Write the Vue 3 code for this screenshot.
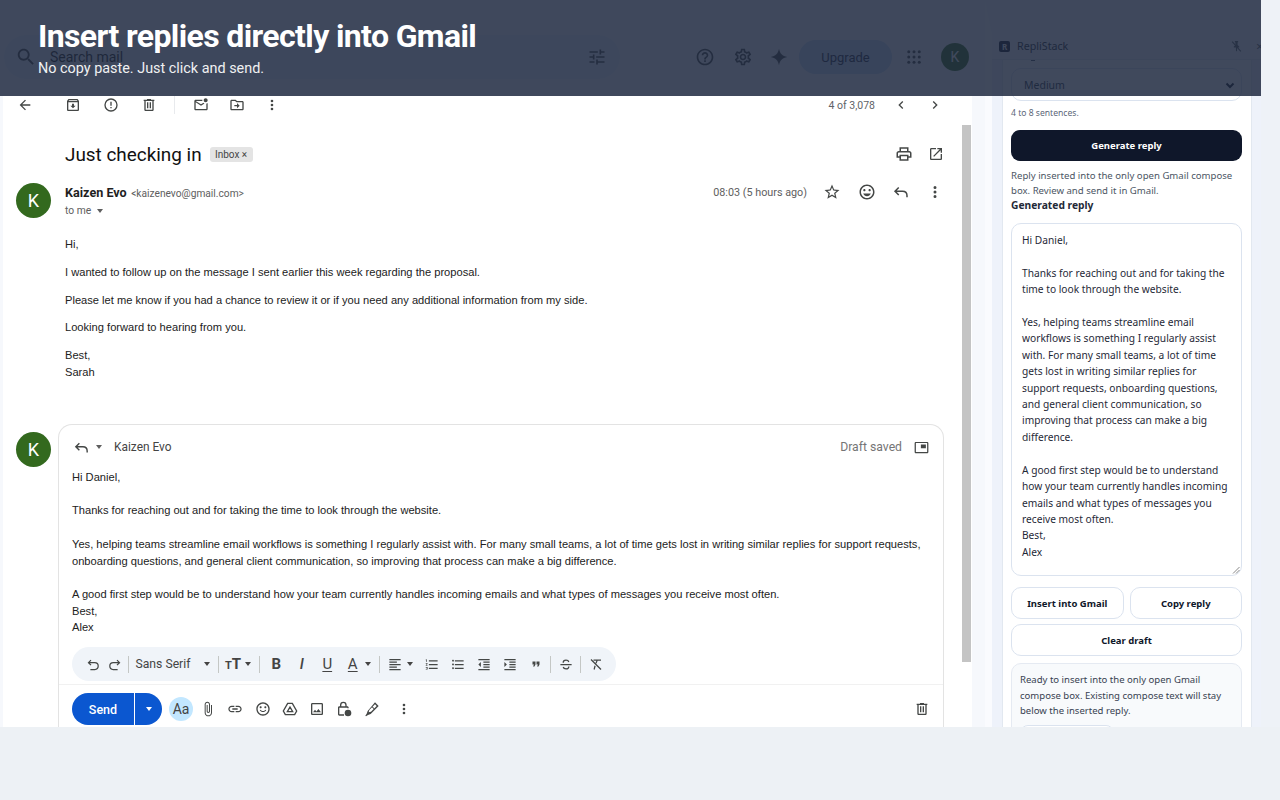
<template>
  <div class="shot">
    <div class="mail">
      <header class="topbar">
        <div class="search">
          <svg class="ic ic-search" viewBox="0 0 24 24"><path :d="ic.search" /></svg>
          <span class="search-text">Search mail</span>
          <svg class="ic ic-tune" viewBox="0 0 24 24"><path :d="ic.tune" /></svg>
        </div>
        <svg class="ic top-help" viewBox="0 0 24 24"><path :d="ic.help" /></svg>
        <svg class="ic top-gear" viewBox="0 0 24 24"><path :d="ic.gear" /></svg>
        <svg class="ic top-spark" viewBox="0 0 24 24"><path d="M12 1c1 6 4.500 10 11 11-6.500 1-10 5-11 11-1-6-4.500-10-11-11 6.500-1 10-5 11-11z" /></svg>
        <button class="upgrade">Upgrade</button>
        <svg class="ic top-apps" viewBox="0 0 24 24">
          <circle v-for="d in appDots" :key="d.k" :cx="d.x" :cy="d.y" r="2" />
        </svg>
        <div class="top-avatar">K</div>
      </header>

      <div class="content">
        <div class="actions">
          <svg class="ic a-back" viewBox="0 0 24 24"><path :d="ic.back" /></svg>
          <svg class="ic a-first" viewBox="0 0 24 24"><path :d="ic.archive" /></svg>
          <svg class="ic a-next" viewBox="0 0 24 24"><path :d="ic.report" /></svg>
          <svg class="ic a-next" viewBox="0 0 24 24"><path :d="ic.trash" /></svg>
          <span class="a-sep"></span>
          <svg class="ic a-mail" viewBox="0 0 24 24"><path :d="ic.unread" /></svg>
          <svg class="ic a-tight" viewBox="0 0 24 24"><path :d="ic.move" /></svg>
          <svg class="ic a-tight" viewBox="0 0 24 24"><path :d="ic.more" /></svg>
          <span class="count">4 of 3,078</span>
          <svg class="ic a-chev" viewBox="0 0 24 24"><path :d="ic.left" /></svg>
          <svg class="ic a-chev2" viewBox="0 0 24 24"><path :d="ic.right" /></svg>
        </div>

        <div class="subject-row">
          <h1 class="subject">Just checking in</h1>
          <span class="chip">Inbox <i>×</i></span>
          <svg class="ic s-print" viewBox="0 0 24 24"><path :d="ic.print" /></svg>
          <svg class="ic s-open" viewBox="0 0 24 24"><path :d="ic.open" /></svg>
        </div>

        <div class="sender-row">
          <div class="avatar">K</div>
          <div class="sender-info">
            <div><b class="name">Kaizen Evo</b> <span class="addr">&lt;kaizenevo@gmail.com&gt;</span></div>
            <div class="tome">to me <i class="mini-caret"></i></div>
          </div>
          <span class="time">08:03 (5 hours ago)</span>
          <svg class="ic m-star" viewBox="0 0 24 24"><path :d="ic.star" /></svg>
          <svg class="ic m-icon" viewBox="0 0 24 24"><path :d="ic.smile" /></svg>
          <svg class="ic-line m-icon" viewBox="0 0 24 24"><path :d="ic.reply" /></svg>
          <svg class="ic m-icon m-last" viewBox="0 0 24 24"><path :d="ic.more" /></svg>
        </div>

        <div class="message">
          <p>Hi,</p>
          <p>I wanted to follow up on the message I sent earlier this week regarding the proposal.</p>
          <p>Please let me know if you had a chance to review it or if you need any additional information from my side.</p>
          <p>Looking forward to hearing from you.</p>
          <p>Best,<br />Sarah</p>
        </div>

        <div class="reply-row">
          <div class="avatar">K</div>
          <div class="compose">
            <div class="compose-head">
              <svg class="ic-line c-reply" viewBox="0 0 24 24"><path :d="ic.reply" /></svg>
              <i class="mini-caret c-caret"></i>
              <span class="c-name">Kaizen Evo</span>
              <span class="draft">Draft saved</span>
              <svg class="ic c-pip" viewBox="0 0 24 24"><path :d="ic.pip" /></svg>
            </div>
            <div class="compose-body">
              <div>Hi Daniel,</div>
              <br />
              <div>Thanks for reaching out and for taking the time to look through the website.</div>
              <br />
              <div>Yes, helping teams streamline email workflows is something I regularly assist with. For many small teams, a lot of time gets lost in writing similar replies for support requests, onboarding questions, and general client communication, so improving that process can make a big difference.</div>
              <br />
              <div>A good first step would be to understand how your team currently handles incoming emails and what types of messages you receive most often.</div>
              <div>Best,</div>
              <div>Alex</div>
            </div>
            <div class="fmt">
              <svg class="ic-line f21" viewBox="0 0 24 24"><path :d="ic.undo" /></svg>
              <svg class="ic-line f21" viewBox="0 0 24 24"><path :d="ic.redo" /></svg>
              <span class="fsep f-s1"></span>
              <span class="font-name">Sans Serif</span>
              <i class="fcaret"></i>
              <span class="fsep"></span>
              <span class="f-tt"><small>T</small>T</span>
              <i class="fcaret"></i>
              <span class="fsep f-s2"></span>
              <span class="f-letter bold">B</span>
              <span class="f-letter ital">I</span>
              <span class="f-letter under">U</span>
              <span class="f-letter under f-a">A</span>
              <i class="fcaret f-ca"></i>
              <span class="fsep"></span>
              <svg class="ic f20" viewBox="0 0 24 24"><path :d="ic.alignLeft" /></svg>
              <i class="fcaret"></i>
              <svg class="ic f26 f-num" viewBox="0 0 24 24"><path :d="ic.numbered" /></svg>
              <svg class="ic f26" viewBox="0 0 24 24"><path :d="ic.bullets" /></svg>
              <svg class="ic f26" viewBox="0 0 24 24"><path :d="ic.indentLess" /></svg>
              <svg class="ic f26" viewBox="0 0 24 24"><path :d="ic.indentMore" /></svg>
              <svg class="ic f26 f-quote" viewBox="0 0 24 24"><path :d="ic.quote" /></svg>
              <span class="fsep f-s3"></span>
              <svg class="ic-line f20" viewBox="0 0 24 24"><path :d="ic.strike" /></svg>
              <span class="fsep"></span>
              <svg class="ic-line f20" viewBox="0 0 24 24"><path :d="ic.clearFmt" /></svg>
            </div>
            <div class="send-row">
              <button class="send">Send</button>
              <button class="send-more"><i></i></button>
              <span class="aa">Aa</span>
              <svg class="ic b-first" viewBox="0 0 24 24"><path :d="ic.attach" /></svg>
              <svg class="ic b-i" viewBox="0 0 24 24"><path :d="ic.link" /></svg>
              <svg class="ic b-i" viewBox="0 0 24 24"><path :d="ic.smileLine" /></svg>
              <svg class="ic-line b-i" viewBox="0 0 24 24"><path :d="ic.drive" /></svg>
              <svg class="ic b-i" viewBox="0 0 24 24"><path :d="ic.photo" /></svg>
              <svg class="ic b-i" viewBox="0 0 24 24"><path :d="ic.lock" /></svg>
              <svg class="ic b-i" viewBox="0 0 24 24"><path :d="ic.pen" /></svg>
              <svg class="ic b-more" viewBox="0 0 24 24"><path :d="ic.more" /></svg>
              <svg class="ic b-trash" viewBox="0 0 24 24"><path :d="ic.trash" /></svg>
            </div>
          </div>
        </div>
      </div>
      <div class="scrollbar"></div>
    </div>

    <aside class="side">
      <div class="side-head">
        <span class="logo">R</span>
        <span class="brand">RepliStack</span>
        <svg class="ic pin" viewBox="0 0 24 24"><path d="M14 4v5l3 3v2h-4v6l-1 1-1-1v-6H7v-2l3-3V4H9V2h6v2h-1z" /><path class="pin-slash" d="M4 3l16 18" /></svg>
        <span class="close">×</span>
      </div>
      <div class="side-card">
        <div class="cut-tick"></div>
        <div class="select-box">Medium <svg class="sel-chev" viewBox="0 0 12 12"><path d="M2.500 4.500 6 8l3.500-3.500" /></svg></div>
        <div class="hint">4 to 8 sentences.</div>
        <button class="generate">Generate reply</button>
        <div class="status">Reply inserted into the only open Gmail compose<br />box. Review and send it in Gmail.</div>
        <div class="gen-title">Generated reply</div>
        <div class="draft-box">{{ draftText }}
          <svg class="grip" viewBox="0 0 8 8"><path d="M7.500 1 1 7.500M7.500 4 4 7.500" /></svg>
        </div>
        <div class="btn-row">
          <button class="ghost">Insert into Gmail</button>
          <button class="ghost">Copy reply</button>
        </div>
        <button class="ghost wide">Clear draft</button>
        <div class="info-box">
          Ready to insert into the only open Gmail<br />compose box. Existing compose text will stay<br />below the inserted reply.
          <div class="info-btn"></div>
        </div>
      </div>
    </aside>

    <div class="banner">
      <div class="banner-title">Insert replies directly into Gmail</div>
      <div class="banner-sub">No copy paste. Just click and send.</div>
    </div>
  </div>
</template>

<script setup>
const ic = {
  search: 'M15.5 14h-.79l-.28-.27C15.41 12.59 16 11.11 16 9.5 16 5.91 13.09 3 9.5 3S3 5.91 3 9.5 5.91 16 9.5 16c1.61 0 3.09-.59 4.23-1.57l.27.28v.79l5 4.99L20.490 19l-4.990-5zm-6 0C7.010 14 5 11.990 5 9.500S7.010 5 9.500 5 14 7.010 14 9.500 11.990 14 9.500 14z',
  tune: 'M3 17v2h6v-2H3zM3 5v2h10V5H3zm10 16v-2h8v-2h-8v-2h-2v6h2zM7 9v2H3v2h4v2h2V9H7zm14 4v-2H11v2h10zm-6-4h2V7h4V5h-4V3h-2v6z',
  help: 'M11 18h2v-2h-2v2zm1-16C6.480 2 2 6.480 2 12s4.480 10 10 10 10-4.480 10-10S17.520 2 12 2zm0 18c-4.410 0-8-3.590-8-8s3.590-8 8-8 8 3.590 8 8-3.590 8-8 8zm0-14c-2.210 0-4 1.790-4 4h2c0-1.100.9-2 2-2s2 .9 2 2c0 2-3 1.750-3 5h2c0-2.250 3-2.500 3-5 0-2.210-1.790-4-4-4z',
  gear: 'M19.430 12.980c.04-.32.07-.64.07-.98 0-.34-.03-.66-.07-.98l2.110-1.650c.19-.15.24-.42.12-.64l-2-3.460c-.09-.16-.26-.25-.44-.25-.06 0-.12.01-.17.03l-2.490 1c-.52-.4-1.080-.73-1.690-.98l-.38-2.650C14.460 2.180 14.250 2 14 2h-4c-.25 0-.46.18-.49.42l-.38 2.650c-.61.25-1.170.59-1.690.98l-2.490-1c-.06-.02-.12-.03-.18-.03-.17 0-.34.09-.43.25l-2 3.460c-.13.22-.07.49.12.64l2.110 1.650c-.04.32-.07.65-.07.98 0 .33.03.66.07.98l-2.110 1.650c-.19.15-.24.42-.12.64l2 3.460c.09.16.26.25.44.25.06 0 .12-.01.17-.03l2.490-1c.52.4 1.080.73 1.690.98l.38 2.650c.03.24.24.42.49.42h4c.25 0 .46-.18.49-.42l.38-2.650c.61-.25 1.170-.59 1.690-.98l2.490 1c.06.02.12.03.18.03.17 0 .34-.09.43-.25l2-3.460c.12-.22.07-.49-.12-.64l-2.110-1.650zm-1.980-1.710c.04.31.05.52.05.73 0 .21-.02.43-.05.73l-.14 1.130.89.7 1.080.84-.7 1.210-1.270-.51-1.040-.42-.9.68c-.43.32-.84.56-1.250.73l-1.060.43-.16 1.130-.2 1.350h-1.400l-.19-1.350-.16-1.130-1.060-.43c-.43-.18-.83-.41-1.230-.71l-.91-.7-1.060.43-1.270.51-.7-1.210 1.080-.84.89-.7-.14-1.130c-.03-.31-.05-.54-.05-.74s.02-.43.05-.73l.14-1.130-.89-.7-1.080-.84.7-1.210 1.270.51 1.040.42.9-.68c.43-.32.84-.56 1.250-.73l1.060-.43.16-1.130.2-1.350h1.390l.19 1.350.16 1.130 1.060.43c.43.18.83.41 1.230.71l.91.7 1.060-.43 1.270-.51.7 1.210-1.070.85-.89.7.14 1.130zM12 8c-2.210 0-4 1.790-4 4s1.790 4 4 4 4-1.790 4-4-1.790-4-4-4zm0 6c-1.100 0-2-.9-2-2s.9-2 2-2 2 .9 2 2-.9 2-2 2z',
  back: 'M20 11H7.830l5.590-5.590L12 4l-8 8 8 8 1.410-1.410L7.830 13H20v-2z',
  archive: 'M20.540 5.230l-1.390-1.680C18.880 3.210 18.470 3 18 3H6c-.47 0-.88.21-1.160.55L3.460 5.230C3.170 5.570 3 6.020 3 6.500V19c0 1.100.9 2 2 2h14c1.100 0 2-.9 2-2V6.500c0-.48-.17-.93-.46-1.270zM6.240 5h11.520l.81.97H5.440l.8-.97zM5 19V8h14v11H5zm8.450-9h-2.900v3H8l4 4 4-4h-2.550z',
  report: 'M12 2a10 10 0 1 0 0 20 10 10 0 0 0 0-20zm0 18a8 8 0 1 1 0-16 8 8 0 0 1 0 16zM11 7h2v6h-2zM11 15h2v2h-2z',
  trash: 'M15 4V3H9v1H4v2h1v13c0 1.100.9 2 2 2h10c1.100 0 2-.9 2-2V6h1V4h-5zm2 15H7V6h10v13zM9 8h2v9H9zm4 0h2v9h-2z',
  unread: 'M22 8.980V18c0 1.100-.9 2-2 2H4c-1.100 0-2-.9-2-2V6c0-1.100.9-2 2-2h10.100c-.06.32-.1.66-.1 1 0 .34.04.68.1 1H4l8 5 3.670-2.290c.47.43 1.020.76 1.630.98L12 13 4 8v10h16V9.900c.74-.15 1.420-.48 2-.92zM16 5c0 1.660 1.340 3 3 3s3-1.340 3-3-1.340-3-3-3-3 1.340-3 3z',
  move: 'M20 6h-8l-2-2H4c-1.100 0-1.990.9-1.990 2L2 18c0 1.100.9 2 2 2h16c1.100 0 2-.9 2-2V8c0-1.100-.9-2-2-2zm0 12H4V6h5.170l2 2H20v10zm-8-4H8v-2h4V9l4 4-4 4v-3z',
  more: 'M12 8a2 2 0 1 0 0-4 2 2 0 0 0 0 4zm0 2a2 2 0 1 0 0 4 2 2 0 0 0 0-4zm0 6a2 2 0 1 0 0 4 2 2 0 0 0 0-4z',
  left: 'M15.410 7.410L14 6l-6 6 6 6 1.410-1.410L10.830 12z',
  right: 'M10 6L8.590 7.410 13.170 12l-4.580 4.590L10 18l6-6z',
  print: 'M19 8h-1V3H6v5H5c-1.660 0-3 1.340-3 3v6h4v4h12v-4h4v-6c0-1.660-1.340-3-3-3zM8 5h8v3H8V5zm8 12v2H8v-4h8v2zm2-2v-2H6v2H4v-4c0-.55.45-1 1-1h14c.55 0 1 .45 1 1v4h-2z',
  open: 'M19 19H5V5h7V3H5c-1.110 0-2 .9-2 2v14c0 1.100.89 2 2 2h14c1.100 0 2-.9 2-2v-7h-2v7zM14 3v2h3.590l-9.830 9.830 1.410 1.410L19 6.410V10h2V3h-7z',
  star: 'M22 9.240l-7.190-.62L12 2 9.190 8.630 2 9.240l5.460 4.730L5.820 21 12 17.270 18.180 21l-1.630-7.030L22 9.240zM12 15.400l-3.760 2.270 1-4.280-3.320-2.880 4.380-.38L12 6.100l1.710 4.040 4.380.38-3.320 2.880 1 4.280L12 15.400z',
  smile: 'M11.990 2C6.470 2 2 6.480 2 12s4.470 10 9.990 10C17.520 22 22 17.520 22 12S17.520 2 11.990 2zM12 20c-4.420 0-8-3.580-8-8s3.580-8 8-8 8 3.580 8 8-3.580 8-8 8zm3.500-9c.83 0 1.500-.67 1.500-1.500S16.330 8 15.500 8 14 8.670 14 9.500s.67 1.500 1.500 1.500zm-7 0c.83 0 1.500-.67 1.500-1.500S9.330 8 8.500 8 7 8.670 7 9.500 7.670 11 8.500 11zm3.500 6.500c2.330 0 4.310-1.460 5.110-3.500H6.890c.8 2.040 2.780 3.500 5.110 3.500z',
  smileLine: 'M11.990 2C6.470 2 2 6.480 2 12s4.470 10 9.990 10C17.520 22 22 17.520 22 12S17.520 2 11.990 2zM12 20c-4.420 0-8-3.580-8-8s3.580-8 8-8 8 3.580 8 8-3.580 8-8 8zm3.500-9c.83 0 1.500-.67 1.500-1.500S16.330 8 15.500 8 14 8.670 14 9.500s.67 1.500 1.500 1.500zm-7 0c.83 0 1.500-.67 1.500-1.500S9.330 8 8.500 8 7 8.670 7 9.500 7.670 11 8.500 11zm3.500 4c-1.500 0-2.800-.8-3.500-2l-1.300.8c1 1.600 2.800 2.700 4.800 2.700s3.800-1.100 4.800-2.700l-1.300-.8c-.7 1.200-2 2-3.500 2z',
  reply: 'M9 6 4 11l5 5M4 11h10c3.500 0 6 2.500 6 6v2',
  pip: 'M19 7h-8v6h8V7zm2-4H3c-1.100 0-2 .9-2 2v14c0 1.100.9 2 2 2h18c1.100 0 2-.9 2-2V5c0-1.100-.9-2-2-2zm0 16.010H3V4.980h18v14.030z',
  undo: 'M8 5 4 9l4 4M4 9h10a5.500 5.500 0 0 1 0 11H7',
  redo: 'M16 5l4 4-4 4M20 9H10a5.500 5.500 0 0 0 0 11h7',
  alignLeft: 'M15 15H3v2h12v-2zm0-8H3v2h12V7zM3 13h18v-2H3v2zm0 8h18v-2H3v2zM3 3v2h18V3H3z',
  numbered: 'M2 17h2v.5H3v1h1v.5H2v1h3v-4H2v1zm1-9h1V4H2v1h1v3zm-1 3h1.800L2 13.100v.9h3v-1H3.200L5 10.900V10H2v1zm5-6v2h14V5H7zm0 14h14v-2H7v2zm0-6h14v-2H7v2z',
  bullets: 'M4 10.500c-.83 0-1.500.67-1.500 1.500s.67 1.500 1.500 1.500 1.500-.67 1.500-1.500-.67-1.500-1.500-1.500zm0-6c-.83 0-1.500.67-1.500 1.500S3.170 7.500 4 7.500 5.500 6.830 5.500 6 4.830 4.500 4 4.500zm0 12c-.83 0-1.500.68-1.500 1.500s.68 1.500 1.500 1.500 1.500-.68 1.500-1.500-.67-1.500-1.500-1.500zM7 19h14v-2H7v2zm0-6h14v-2H7v2zm0-8v2h14V5H7z',
  indentLess: 'M11 17h10v-2H11v2zm-8-5l4 4V8l-4 4zm0 9h18v-2H3v2zM3 3v2h18V3H3zm8 6h10V7H11v2zm0 4h10v-2H11v2z',
  indentMore: 'M3 21h18v-2H3v2zM3 8v8l4-4-4-4zm8 9h10v-2H11v2zM3 3v2h18V3H3zm8 6h10V7H11v2zm0 4h10v-2H11v2z',
  quote: 'M6 17h3l2-4V7H5v6h3zm8 0h3l2-4V7h-6v6h3z',
  strike: 'M3 12h18M7.500 9c0-2.500 2-4 4.500-4s4 1 4.500 3M16.500 15c0 2.500-2 4-4.500 4s-4-1-4.500-3',
  clearFmt: 'M4 4l16 16M8 5h12M14 5l-2 5M10.500 14 9 20',
  attach: 'M16.500 6v11.500c0 2.210-1.790 4-4 4s-4-1.790-4-4V5c0-1.380 1.120-2.500 2.500-2.500s2.500 1.120 2.500 2.500v10.500c0 .55-.45 1-1 1s-1-.45-1-1V6H10v9.500c0 1.380 1.120 2.500 2.500 2.500s2.500-1.120 2.500-2.500V5c0-2.210-1.790-4-4-4S7 2.790 7 5v12.500c0 3.040 2.460 5.500 5.500 5.500s5.500-2.460 5.500-5.500V6h-1.500z',
  link: 'M3.900 12c0-1.710 1.390-3.100 3.100-3.100h4V7H7c-2.760 0-5 2.240-5 5s2.240 5 5 5h4v-1.900H7c-1.710 0-3.100-1.390-3.100-3.100zM8 13h8v-2H8v2zm9-6h-4v1.900h4c1.710 0 3.100 1.390 3.100 3.100s-1.390 3.100-3.100 3.100h-4V17h4c2.760 0 5-2.240 5-5s-2.240-5-5-5z',
  drive: 'M8.500 3.500h7L22 15l-3 5.500H5L2 15zM12 9l-4 7h8z',
  photo: 'M19 5v14H5V5h14m0-2H5c-1.100 0-2 .9-2 2v14c0 1.100.9 2 2 2h14c1.100 0 2-.9 2-2V5c0-1.100-.9-2-2-2zm-4.860 8.860l-3 3.870L9 13.140 6 17h12l-3.860-5.140z',
  lock: 'M11 1a5 5 0 0 0-5 5v2H5c-1.100 0-2 .9-2 2v10c0 1.100.9 2 2 2h7v-2H5V10h12v1h2v-1c0-1.100-.9-2-2-2h-1V6a5 5 0 0 0-5-5zM8 6a3 3 0 0 1 6 0v2H8V6zm10 7a5 5 0 1 0 0 10 5 5 0 0 0 0-10z',
  pen: 'M16.500 2 22 7.500 10 19.500 6 21l-3 2-1-1 2-3 1.500-4zM16.500 5 8 13.500l-1 3.500 3.500-1L19 7.500zM13 8.500l2.500 2.500-1 1L12 9.500z'
}

// grid of dots for the apps launcher
const appDots = []
for (const x of [5, 12, 19]) {
  for (const y of [5, 12, 19]) {
    appDots.push({ k: x + '-' + y, x, y })
  }
}

const draftText = `Hi Daniel,

Thanks for reaching out and for taking the
time to look through the website.

Yes, helping teams streamline email
workflows is something I regularly assist
with. For many small teams, a lot of time
gets lost in writing similar replies for
support requests, onboarding questions,
and general client communication, so
improving that process can make a big
difference.

A good first step would be to understand
how your team currently handles incoming
emails and what types of messages you
receive most often.
Best,
Alex`
</script>

<style>
html,
body {
  margin: 0;
  background: #edf1f5;
}
</style>

<style scoped>
.shot {
  position: relative;
  display: flex;
  height: 727px;
  overflow: hidden;
  background: #eef2f7;
  font-family: "Liberation Sans", Arial, sans-serif;
  color: #202124;
}

.ic {
  fill: #444746;
  flex: none;
  display: block;
}

.ic-line {
  fill: none;
  stroke: #444746;
  stroke-width: 2;
  flex: none;
  display: block;
}

/* gmail column */
.mail {
  position: relative;
  width: 985px;
  flex: none;
  background: #f6f8fc;
}

.topbar {
  height: 96px;
  display: flex;
  align-items: flex-start;
  padding: 35px 0 0 4px;
  box-sizing: border-box;
}

.search {
  width: 616px;
  height: 44px;
  border-radius: 22px;
  background: #eaf1fb;
  display: flex;
  align-items: center;
  flex: none;
}

.ic-search {
  width: 22px;
  height: 22px;
  margin-left: 11px;
}

.search-text {
  margin-left: 13px;
  font: 14px Roboto, sans-serif;
  flex: 1;
  color: #1f1f1f;
}

.ic-tune {
  width: 20px;
  height: 20px;
  margin-right: 13px;
}

.top-help,
.top-gear {
  width: 20px;
  height: 20px;
  margin-top: 12px;
}

.top-help {
  margin-left: 75px;
}

.top-gear {
  margin-left: 18px;
}

.top-spark {
  width: 18px;
  height: 18px;
  margin: 13px 0 0 17px;
}

.upgrade {
  width: 93px;
  height: 34px;
  margin: 5px 0 0 11px;
  border: 0;
  border-radius: 17px;
  background: #c5d9f7;
  font: 13px Roboto, sans-serif;
  color: #1f2a44;
  padding: 0;
}

.top-apps {
  width: 18px;
  height: 18px;
  margin: 13px 0 0 13px;
}

.top-avatar {
  width: 28px;
  height: 28px;
  margin: 8px 0 0 18px;
  border-radius: 50%;
  background: #33691e;
  color: #fff;
  font: 14px/28px Roboto, sans-serif;
  text-align: center;
}

.content {
  height: 631px;
  width: 972px;
  background: #fff;
  border-left: 3px solid #f6f8fc;
  box-sizing: border-box;
}

.actions {
  height: 18px;
  display: flex;
  align-items: center;
  padding-left: 14px;
}

.actions .ic {
  width: 16px;
  height: 16px;
}

.actions .a-first {
  margin-left: 32px;
}

.actions .a-next {
  margin-left: 22px;
}

.a-sep {
  width: 1px;
  height: 18px;
  background: #e8eaed;
  margin-left: 17px;
}

.actions .a-mail {
  margin-left: 18px;
}

.actions .a-tight {
  margin-left: 19.500px;
}

.count {
  margin-left: auto;
  font: 10.500px Roboto, sans-serif;
  color: #5f6368;
  margin-right: 18px;
}

.actions .a-chev {
  margin-right: 18px;
}

.actions .a-chev2 {
  margin-right: 29px;
}

.subject-row {
  display: flex;
  align-items: center;
  height: 26px;
  margin-top: 27px;
  padding-left: 62px;
}

.subject {
  margin: 0;
  font: 400 18.900px Roboto, sans-serif;
  color: #111;
}

.chip {
  margin-left: 8px;
  width: 43px;
  height: 15px;
  box-sizing: border-box;
  border-radius: 3px;
  background: #e4e4e4;
  font: 10px/15px Roboto, sans-serif;
  color: #444;
  text-align: center;
}

.chip i {
  font-style: normal;
}

.s-print {
  width: 18px;
  height: 18px;
  margin-left: auto;
}

.s-open {
  width: 16px;
  height: 16px;
  margin: 0 28px 0 15px;
}

.sender-row {
  display: flex;
  align-items: flex-start;
  height: 44px;
  margin-top: 16px;
  padding-left: 13px;
}

.avatar {
  width: 35px;
  height: 35px;
  border-radius: 50%;
  background: #33691e;
  color: #fff;
  font: 18px/35px Roboto, sans-serif;
  text-align: center;
  flex: none;
}

.sender-info {
  margin-left: 14px;
  flex: 1;
}

.name {
  font: 700 12.600px Roboto, sans-serif;
  color: #1f1f1f;
}

.addr {
  font: 10.200px Roboto, sans-serif;
  color: #5e5e5e;
}

.tome {
  margin-top: 3px;
  font: 10.300px Roboto, sans-serif;
  color: #5e5e5e;
}

.mini-caret {
  display: inline-block;
  width: 0;
  height: 0;
  margin-left: 3px;
  vertical-align: 1px;
  border: 3.500px solid transparent;
  border-top: 4px solid #5e5e5e;
  border-bottom: 0;
}

.time {
  font: 10.800px Roboto, sans-serif;
  color: #5e5e5e;
  margin: 3px 16px 0 0;
}

.m-star {
  width: 18px;
  height: 18px;
  margin-right: 17px;
}

.m-icon {
  width: 18px;
  height: 18px;
  margin-right: 16px;
}

.m-last {
  margin-right: 28px;
}

.message {
  padding-left: 62px;
  height: 188px;
  padding-top: 9px;
  font-size: 11.140px;
  line-height: 16.600px;
  color: #222;
}

.message p {
  margin: 0 0 11.200px;
}

.reply-row {
  display: flex;
  padding-left: 13px;
  align-items: flex-start;
}

.reply-row .avatar {
  margin-top: 8px;
}

.compose {
  margin-left: 7px;
  width: 886px;
  height: 330px;
  box-sizing: border-box;
  border: 1px solid #e3e3e3;
  border-bottom: 0;
  border-radius: 14px 14px 0 0;
  background: #fff;
}

.compose-head {
  display: flex;
  align-items: center;
  height: 44px;
  padding-left: 14px;
}

.c-reply {
  width: 17px;
  height: 17px;
}

.c-caret {
  margin-left: 6px;
}

.c-name {
  margin-left: 12px;
  font: 11.900px Roboto, sans-serif;
  color: #444;
}

.draft {
  margin-left: auto;
  font: 12.200px Roboto, sans-serif;
  color: #757575;
}

.c-pip {
  width: 15px;
  height: 15px;
  margin: 0 14px 0 12px;
}

.compose-body {
  padding: 0 14px 0 13px;
  height: 178px;
  font-size: 11.140px;
  line-height: 16.700px;
  color: #222;
}

.fmt {
  width: 544px;
  height: 34px;
  margin-left: 13px;
  border-radius: 17px;
  background: #f0f4f9;
  display: flex;
  align-items: center;
  padding-left: 11px;
  box-sizing: border-box;
}

.fmt svg {
  height: 15px;
}

.f21 {
  width: 21px;
}

.f20 {
  width: 20px;
}

.f26 {
  width: 26px;
}

.f-num {
  margin-left: 2px;
}

.f-quote {
  height: 12px !important;
  margin-right: -3px;
}

.fsep {
  width: 1px;
  height: 17px;
  background: #c4c7c5;
  margin: 0 4.500px;
  flex: none;
}

.f-s1 {
  margin: 0 6.500px 0 3px;
}

.f-s2 {
  margin: 0 4px 0 4px;
}

.font-name {
  width: 66px;
  font: 12.200px Roboto, sans-serif;
  color: #444;
}

.fcaret {
  width: 12px;
  height: 0;
  flex: none;
  position: relative;
}

.fcaret::after {
  content: "";
  position: absolute;
  left: 2.500px;
  top: -2px;
  border: 3.500px solid transparent;
  border-top: 4px solid #444;
  border-bottom: 0;
}

.f-ca {
  margin-left: -2px;
}

.f-tt {
  width: 19px;
  text-align: center;
  font: 700 15px Roboto, sans-serif;
  color: #444;
}

.f-tt small {
  font-size: 11px;
}

.f-letter {
  width: 25.500px;
  text-align: center;
  font: 15px Roboto, sans-serif;
  color: #444;
}

.bold {
  font-weight: 700;
}

.ital {
  font-style: italic;
  font-weight: 500;
}

.under {
  text-decoration: underline;
  text-underline-offset: 2px;
}

.f-a {
  margin-right: -1px;
}

.send-row {
  display: flex;
  align-items: center;
  height: 32px;
  margin-top: 3px;
  padding: 8px 0 0 13px;
  border-top: 1px solid #f1f1f1;
}

.send {
  width: 62px;
  height: 32px;
  border: 0;
  border-radius: 16px 0 0 16px;
  background: #0b57d0;
  color: #fff;
  font: 500 12.500px Roboto, sans-serif;
  padding: 0;
}

.send-more {
  width: 27px;
  height: 32px;
  margin-left: 1px;
  border: 0;
  border-radius: 0 16px 16px 0;
  background: #0b57d0;
  padding: 0;
  display: flex;
  align-items: center;
  justify-content: center;
}

.send-more i {
  border: 3.500px solid transparent;
  border-top: 4px solid #fff;
  border-bottom: 0;
}

.aa {
  width: 24px;
  height: 24px;
  margin-left: 7px;
  border-radius: 50%;
  background: #c2e7ff;
  font: 14px/24px Roboto, sans-serif;
  color: #444;
  text-align: center;
}

.send-row svg {
  width: 16px;
  height: 16px;
}

.b-first {
  margin-left: 7px;
}

.b-i {
  margin-left: 11.300px;
}

.b-more {
  margin-left: 16px;
}

.b-trash {
  margin-left: auto;
  margin-right: 13px;
}

.scrollbar {
  position: absolute;
  left: 962px;
  top: 125px;
  width: 9px;
  height: 537px;
  background: #c4c4c4;
}

/* replistack panel */
.side {
  width: 276px;
  flex: none;
  box-sizing: border-box;
  border-top: 33px solid #f6f8fc;
  border-left: 7px solid #fafbfe;
  background: #eef2fa;
  font-family: "Noto Sans", sans-serif;
  color: #0f172a;
  overflow: hidden;
}

.side-head {
  height: 27px;
  margin-left: -7px;
  background: #f6f8fc;
  display: flex;
  align-items: center;
  padding-left: 14px;
  box-sizing: border-box;
  border-bottom: 1px solid #e5e9f0;
  font: 10.700px "Noto Sans", sans-serif;
  color: #1f2937;
}

.logo {
  width: 11px;
  height: 11px;
  border-radius: 2px;
  background: #0f172a;
  color: #fff;
  font: 700 8px/11px "Noto Sans", sans-serif;
  text-align: center;
}

.brand {
  margin-left: 7px;
  flex: 1;
}

.pin {
  width: 13px;
  height: 13px;
  margin-right: 13px;
  fill: #5f6368;
}

.pin-slash {
  fill: none;
  stroke: #5f6368;
  stroke-width: 2;
}

.close {
  width: 5px;
  flex: none;
  font-size: 13px;
  line-height: 13px;
  color: #5f6368;
}

.side-card {
  width: 250px;
  margin-left: 10px;
  height: 667px;
  box-sizing: border-box;
  background: #fff;
  border: solid #e2e8f0;
  border-width: 0 1px;
  padding: 0 9px 0 8px;
}

.cut-tick {
  width: 4px;
  height: 1px;
  margin-left: 20px;
  background: #475569;
}

.select-box {
  height: 33px;
  margin-top: 7px;
  box-sizing: border-box;
  border: 1px solid #dbe3ef;
  border-radius: 10px;
  display: flex;
  align-items: center;
  justify-content: space-between;
  padding: 0 5px 0 12px;
  font-size: 10.500px;
  color: #2d3748;
}

.sel-chev {
  width: 12px;
  height: 12px;
  fill: none;
  stroke: #111827;
  stroke-width: 2;
}

.hint {
  margin-top: 6px;
  font-size: 8.600px;
  line-height: 12px;
  color: #5b6678;
}

.generate {
  display: block;
  width: 100%;
  height: 31px;
  margin-top: 11px;
  border: 0;
  border-radius: 9px;
  background: #0f172a;
  color: #fff;
  font: 700 9.500px "Noto Sans", sans-serif;
  padding: 0;
}

.status {
  margin-top: 7px;
  font-size: 9.600px;
  line-height: 15px;
  color: #4b5563;
}

.gen-title {
  font: 700 10.250px/15px "Noto Sans", sans-serif;
  color: #1f2937;
}

.draft-box {
  position: relative;
  height: 353px;
  margin-top: 10px;
  box-sizing: border-box;
  border: 1px solid #dbe3ef;
  border-radius: 10px;
  padding: 8px 10px;
  white-space: pre-line;
  font-size: 10.200px;
  line-height: 16.400px;
  color: #1f2937;
}

.grip {
  position: absolute;
  right: 1px;
  bottom: 1px;
  width: 8px;
  height: 8px;
  stroke: #888;
  fill: none;
}

.btn-row {
  display: flex;
  gap: 6px;
  margin-top: 11px;
}

.ghost {
  flex: 1;
  height: 32px;
  padding: 0;
  background: #fff;
  border: 1px solid #dbe3ef;
  border-radius: 10px;
  font: 700 9.500px "Noto Sans", sans-serif;
  color: #0f172a;
}

.wide {
  display: block;
  width: 100%;
  margin-top: 5px;
}

.info-box {
  margin-top: 7px;
  height: 90px;
  box-sizing: border-box;
  border: 1px solid #e5eaf2;
  border-radius: 10px;
  background: #f8fafc;
  padding: 8px 8px;
  font-size: 9.550px;
  line-height: 15.600px;
  color: #374151;
}

.info-btn {
  width: 92px;
  height: 24px;
  margin-top: 6px;
  border: 1px solid #dbe3ef;
  border-radius: 8px;
  background: #fff;
}

/* caption strip on top of the capture */
.banner {
  position: absolute;
  left: 0;
  top: 0;
  width: 1261px;
  height: 96px;
  padding: 18px 38px 0;
  box-sizing: border-box;
  background: rgba(30, 41, 64, 0.85);
  color: #fff;
  font-family: Roboto, sans-serif;
}

.banner-title {
  font-size: 32px;
  font-weight: 700;
  line-height: 36px;
  letter-spacing: -0.620px;
}

.banner-sub {
  font-size: 14.400px;
  line-height: 20px;
  margin-top: 5px;
  opacity: 0.92;
}
</style>
